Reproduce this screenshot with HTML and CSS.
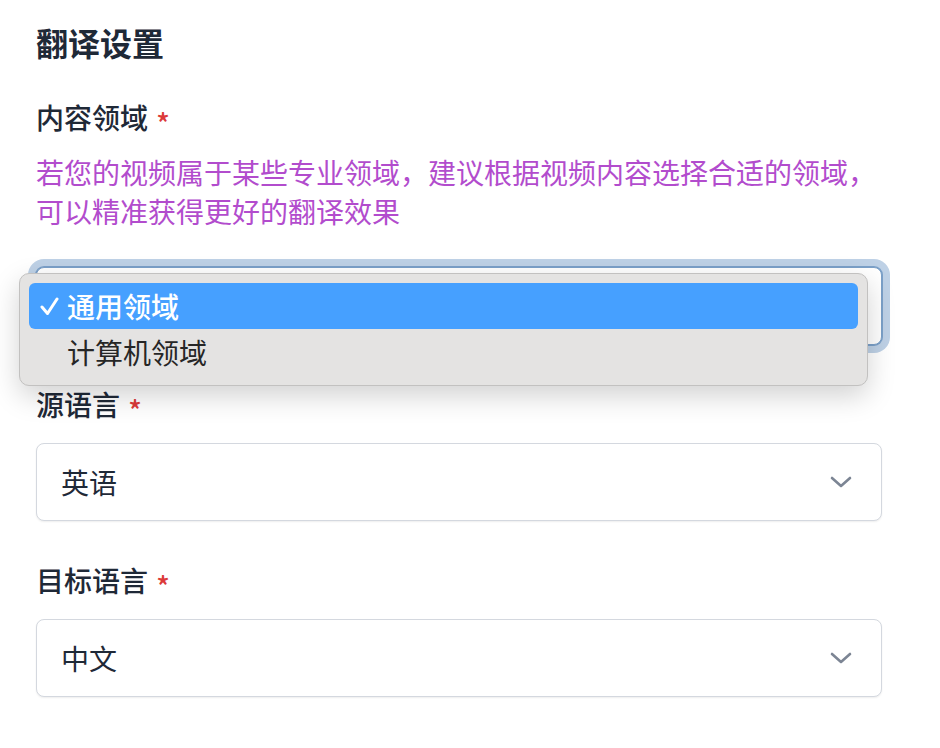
FILE: index.html
```html
<!DOCTYPE html>
<html lang="zh-CN">
<head>
<meta charset="utf-8">
<title>翻译设置</title>
<link rel="stylesheet" href="styles.css">
</head>
<body>
<div class="page">
  <h2 class="title">翻译设置</h2>

  <div class="field field-first">
    <div class="label">内容领域 <span class="req">*</span></div>
    <p class="hint">若您的视频属于某些专业领域，建议根据视频内容选择合适的领域，可以精准获得更好的翻译效果</p>
    <div class="select-wrap hint-gap">
      <div class="select focused">
        <span class="value"></span>
        <svg class="chev" width="22" height="12" viewBox="0 0 22 12"><path d="M2 2 L11 10 L20 2" fill="none" stroke="#7c8594" stroke-width="2.6" stroke-linecap="round" stroke-linejoin="round"/></svg>
      </div>
      <div class="menu">
        <div class="item selected">
          <span class="slot"><svg class="check" width="19" height="19" viewBox="0 0 19 19"><path d="M2 10 L7.5 16.5 L17 2" fill="none" stroke="#fff" stroke-width="3" stroke-linecap="round" stroke-linejoin="round"/></svg></span>
          <span class="item-text">通用领域</span>
        </div>
        <div class="item">
          <span class="slot"></span>
          <span class="item-text">计算机领域</span>
        </div>
      </div>
    </div>
  </div>

  <div class="field">
    <div class="label">源语言 <span class="req">*</span></div>
    <div class="select-wrap">
      <div class="select">
        <span class="value">英语</span>
        <svg class="chev" width="22" height="12" viewBox="0 0 22 12"><path d="M2 2 L11 10 L20 2" fill="none" stroke="#7c8594" stroke-width="2.6" stroke-linecap="round" stroke-linejoin="round"/></svg>
      </div>
    </div>
  </div>

  <div class="field">
    <div class="label">目标语言 <span class="req">*</span></div>
    <div class="select-wrap">
      <div class="select">
        <span class="value">中文</span>
        <svg class="chev" width="22" height="12" viewBox="0 0 22 12"><path d="M2 2 L11 10 L20 2" fill="none" stroke="#7c8594" stroke-width="2.6" stroke-linecap="round" stroke-linejoin="round"/></svg>
      </div>
    </div>
  </div>
</div>
</body>
</html>
```

FILE: styles.css
```css
html, body {
  margin: 0;
  background: #ffffff;
}

body {
  font-family: "Noto Sans CJK SC", "Noto Sans", sans-serif;
  color: #1f2937;
}

.page {
  width: 846px;
  padding: 18px 0 40px 36px;
}

.title {
  margin: 0;
  font-size: 32px;
  line-height: 48px;
  font-weight: 700;
  color: #1f2937;
}

.field {
  margin-top: 39px;
}

.field-first {
  margin-top: 31px;
}

.label {
  height: 40px;
  font-size: 28px;
  line-height: 40px;
  font-weight: 500;
  color: #1f2937;
}

.req {
  color: #dc3a3a;
  font-size: 28px;
  line-height: 0;
  vertical-align: -5px;
  margin-left: 2px;
}

.hint {
  margin: 16px 0 0;
  font-size: 28px;
  line-height: 39px;
  color: #b24ccd;
}

.select-wrap {
  position: relative;
  margin-top: 19px;
}

.select-wrap.hint-gap {
  margin-top: 36px;
}

.select {
  box-sizing: border-box;
  height: 78px;
  border: 1px solid #d4d8df;
  border-radius: 8px;
  background: #ffffff;
  box-shadow: 0 1px 2px rgba(0, 0, 0, 0.07);
  display: flex;
  align-items: center;
  justify-content: space-between;
  padding: 0 29px 0 24px;
}

.select.focused {
  border-color: #7ba0c8;
  box-shadow: 0 0 0 1px #7ba0c8, 0 0 0 8px #bed1e6;
}

.value {
  font-size: 28px;
  line-height: 40px;
  color: #1f2937;
}

.chev {
  display: block;
}

.menu {
  position: absolute;
  left: -17px;
  top: 6px;
  width: 849px;
  box-sizing: border-box;
  padding: 9px 9px 10px;
  background: #e4e3e2;
  border: 1px solid #c2c1c0;
  border-radius: 10px;
  box-shadow: 0 10px 28px rgba(0, 0, 0, 0.18);
}

.item {
  height: 46px;
  display: flex;
  align-items: center;
  border-radius: 6px;
  color: #262626;
}

.item.selected {
  background: #46a0ff;
  color: #ffffff;
}

.item.selected .item-text {
  font-weight: 500;
}

.slot {
  width: 38px;
  flex: none;
  display: flex;
  align-items: center;
}

.check {
  margin-left: 11px;
}

.item-text {
  font-size: 28px;
  line-height: 46px;
}
```
